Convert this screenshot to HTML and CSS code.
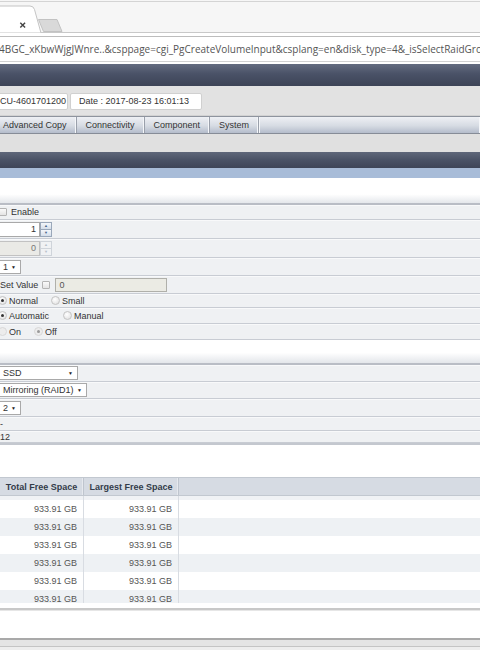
FILE: index.html
```html
<!DOCTYPE html>
<html>
<head>
<meta charset="utf-8">
<link rel="stylesheet" href="styles.css">
</head>
<body>
<div class="tabstrip">
  <svg width="480" height="33" viewBox="0 0 480 33">
    <rect x="0" y="0" width="480" height="33" fill="#f6f6f6"/>
    <line x1="0" y1="1.5" x2="480" y2="1.5" stroke="#d4d4d4"/>
    <path d="M-2,33 V6 H30 Q33.5,6 34.5,9.5 L41,33 Z" fill="#ffffff" stroke="#c4c4c4"/>
    <line x1="41" y1="32.5" x2="480" y2="32.5" stroke="#c8c8c8"/>
    <path d="M38.5,19.5 H57 L62,31.5 H43.5 Z" fill="#d9d9d9" stroke="#c2c2c2"/>
    <path d="M20.3,22.8 L25.1,27.6 M25.1,22.8 L20.3,27.6" stroke="#444" stroke-width="1.4"/>
  </svg>
</div>
<div class="toolbar">
  <div class="omnibox"><span class="url">4BGC_xKbwWjgJWnre..&amp;csppage=cgi_PgCreateVolumeInput&amp;csplang=en&amp;disk_type=4&amp;_isSelectRaidGroup</span></div>
</div>
<div class="header"></div>
<div class="infobar">
  <div class="box box-first">CU-4601701200</div>
  <div class="box box-date">Date : 2017-08-23 16:01:13</div>
</div>
<div class="menu">
  <div class="mtab mtab-first">Advanced Copy</div>
  <div class="mtab">Connectivity</div>
  <div class="mtab">Component</div>
  <div class="mtab">System</div>
  <div class="mtab mtab-fill"></div>
</div>
<div class="graygap"></div>
<div class="titlebar"></div>
<div class="subbar"></div>
<div class="spacer-a"></div>

<div class="form">
  <div class="row r1"><span class="chk chk-first"></span><span class="lbl">Enable</span></div>
  <div class="row r2">
    <span class="num">1</span>
    <span class="spin"><span class="sb up">&#9650;</span><span class="sb dn">&#9660;</span></span>
  </div>
  <div class="row r3">
    <span class="num num-dis">0</span>
    <span class="spin spin-dis"><span class="sb up">&#9650;</span><span class="sb dn">&#9660;</span></span>
  </div>
  <div class="row r4"><span class="sel sel-1">1<span class="arr">&#9660;</span></span></div>
  <div class="row r5">
    <span class="lbl lbl-set">Set Value</span>
    <span class="chk chk-set"></span>
    <span class="txt-dis">0</span>
  </div>
  <div class="row r6">
    <span class="rad rad-first on"></span><span class="lbl">Normal</span>
    <span class="rad rad-next"></span><span class="lbl">Small</span>
  </div>
  <div class="row r7">
    <span class="rad rad-first on"></span><span class="lbl">Automatic</span>
    <span class="rad rad-next2"></span><span class="lbl">Manual</span>
  </div>
  <div class="row r8">
    <span class="rad rad-first dis"></span><span class="lbl">On</span>
    <span class="rad rad-next3 dis on-dis"></span><span class="lbl">Off</span>
  </div>
</div>

<div class="spacer-b"></div>

<div class="form form2">
  <div class="row r9"><span class="sel sel-ssd">SSD<span class="arr">&#9660;</span></span></div>
  <div class="row r10"><span class="sel sel-raid">Mirroring (RAID1)<span class="arr">&#9660;</span></span></div>
  <div class="row r11"><span class="sel sel-1">2<span class="arr">&#9660;</span></span></div>
  <div class="row r12"><span class="lbl lbl-dash">-</span></div>
  <div class="row r13"><span class="lbl">12</span></div>
</div>

<div class="spacer-c"></div>

<div class="grid">
  <div class="ghead">
    <div class="gc c1">Total Free Space</div>
    <div class="gc c2">Largest Free Space</div>
    <div class="gc c3"></div>
  </div>
  <div class="gstrip"><div class="gc c1"></div><div class="gc c2"></div><div class="gc c3"></div></div>
  <div class="gbody">
    <div class="grow"><div class="gc c1">933.91 GB</div><div class="gc c2">933.91 GB</div><div class="gc c3"></div></div>
    <div class="grow alt"><div class="gc c1">933.91 GB</div><div class="gc c2">933.91 GB</div><div class="gc c3"></div></div>
    <div class="grow"><div class="gc c1">933.91 GB</div><div class="gc c2">933.91 GB</div><div class="gc c3"></div></div>
    <div class="grow alt"><div class="gc c1">933.91 GB</div><div class="gc c2">933.91 GB</div><div class="gc c3"></div></div>
    <div class="grow"><div class="gc c1">933.91 GB</div><div class="gc c2">933.91 GB</div><div class="gc c3"></div></div>
    <div class="grow alt"><div class="gc c1">933.91 GB</div><div class="gc c2">933.91 GB</div><div class="gc c3"></div></div>
  </div>
</div>

<div class="gridgap"></div>
<div class="gridline"></div>
<div class="spacer-d"></div>
<div class="statusbar"></div>
</body>
</html>
```

FILE: styles.css
```css
html, body {
  margin: 0;
  padding: 0;
}
body {
  width: 480px;
  height: 650px;
  overflow: hidden;
  background: #ffffff;
  font-family: "Liberation Sans", Arial, sans-serif;
  font-size: 9px;
  color: #333333;
}

.tabstrip {
  height: 33px;
}
.tabstrip svg {
  display: block;
}

.toolbar {
  height: 31px;
  background: #ffffff;
  padding-top: 3px;
  box-sizing: border-box;
}
.omnibox {
  height: 26px;
  border-top: 1px solid #bdbdbd;
  border-bottom: 1px solid #d2d2d2;
  box-sizing: border-box;
  background: #ffffff;
  display: flex;
  align-items: center;
  overflow: hidden;
  white-space: nowrap;
}
.url {
  font-family: "Open Sans", "Noto Sans", sans-serif;
  font-size: 10px;
  color: #555555;
  margin-left: -1px;
  letter-spacing: 0;
}

.header {
  height: 22px;
  background: linear-gradient(#646c80, #4a5267 45%, #3d4457);
}

.infobar {
  height: 30px;
  background: #e2e2e2;
  display: flex;
  align-items: center;
  gap: 2px;
  padding-top: 1px;
  box-sizing: border-box;
  border-bottom: 1px solid #d2d2d2;
}
.box {
  height: 17px;
  background: #ffffff;
  border: 1px solid #d0d0d0;
  border-radius: 2px;
  box-sizing: border-box;
  display: flex;
  align-items: center;
  font-size: 9px;
  color: #333;
}
.box-first {
  width: 74px;
  margin-left: -6px;
  padding-left: 5px;
}
.box-date {
  width: 132px;
  padding-left: 8px;
}

.menu {
  height: 18px;
  display: flex;
  border-top: 1px solid #8e949e;
  border-bottom: 1px solid #868c97;
  box-sizing: border-box;
  background: linear-gradient(#eef0f4, #d6dbe3 55%, #b4bccb);
}
.mtab {
  padding: 0 9px;
  display: flex;
  align-items: center;
  color: #333;
  border-right: 1px solid #9aa0ab;
  box-shadow: inset -1px 0 0 #f4f6f9;
  white-space: nowrap;
}
.mtab-first {
  margin-left: -6px;
}
.mtab-fill {
  flex: 1;
  border-right: none;
  border-left: 1px solid #f4f6f9;
}

.graygap {
  height: 18px;
  background: #e0e0e0;
}
.titlebar {
  height: 16px;
  background: linear-gradient(#5f677a, #4a5266 50%, #3e4558);
}
.subbar {
  height: 10px;
  background: #a8bcd8;
}
.spacer-a {
  height: 25px;
  background: linear-gradient(#ffffff 65%, #e4e7eb);
}

.form {
  border-top: 2px solid #b9bdc5;
  background: #eff1f3;
}
.row {
  display: flex;
  align-items: center;
  border-bottom: 1px solid #c8ccd3;
  box-shadow: inset 0 1px 0 #f8f9fa;
  box-sizing: border-box;
  white-space: nowrap;
}
.r1 { height: 15px; }
.r2 { height: 19px; }
.r3 { height: 19px; }
.r4 { height: 18px; }
.r5 { height: 18px; }
.r6 { height: 14px; }
.r7 { height: 16px; }
.r8 { height: 16px; }
.r9 { height: 17px; }
.r10 { height: 17px; }
.r11 { height: 18px; }
.r12 { height: 14px; }
.r13 { height: 12px; }
.form2 {
  border-bottom: 2px solid #c4c8cf;
}

.lbl {
  color: #333;
}
.chk {
  width: 6px;
  height: 6px;
  border: 1px solid #b4b4b4;
  background: linear-gradient(#fafafa, #e4e4e4);
  border-radius: 1px;
}
.chk-first {
  margin-left: -1px;
  margin-right: 4px;
}
.lbl-set {
  margin-left: 0;
}
.chk-set {
  margin-left: 4px;
}
.txt-dis {
  margin-left: 5px;
  width: 112px;
  height: 14px;
  box-sizing: border-box;
  border: 1px solid #b0b0aa;
  background: #ebebe4;
  padding-left: 3px;
  display: flex;
  align-items: center;
  color: #555;
}

.num {
  width: 41px;
  height: 15px;
  margin-left: -1px;
  box-sizing: border-box;
  border: 1px solid #a9a9a9;
  background: #ffffff;
  display: flex;
  align-items: center;
  justify-content: flex-end;
  padding-right: 3px;
  color: #333;
}
.num-dis {
  background: #eaeae6;
  border-color: #c2c2c2;
  color: #777;
}
.spin {
  width: 12px;
  height: 15px;
  display: flex;
  flex-direction: column;
  border: 1px solid #9aa8ba;
  box-sizing: border-box;
  margin-left: 0;
}
.sb {
  flex: 1;
  display: flex;
  align-items: center;
  justify-content: center;
  font-size: 4px;
  color: #4a6488;
  background: linear-gradient(#f4f7fb, #d4deea);
  line-height: 1;
}
.sb.up {
  border-bottom: 1px solid #9aa8ba;
}
.spin-dis {
  border-color: #cfd4da;
}
.spin-dis .sb {
  color: #b8c0ca;
  background: #f0f2f4;
}
.spin-dis .sb.up {
  border-bottom-color: #cfd4da;
}

.sel {
  height: 14px;
  box-sizing: border-box;
  border: 1px solid #a9a9a9;
  background: #ffffff;
  display: flex;
  align-items: center;
  padding-left: 3px;
  color: #333;
}
.sel-1 {
  width: 22px;
  margin-left: -1px;
}
.sel-ssd {
  width: 79px;
  margin-left: -1px;
}
.sel-raid {
  width: 88px;
  margin-left: -1px;
}
.arr {
  font-size: 5px;
  margin-left: auto;
  margin-right: 4px;
  color: #222;
}

.rad {
  width: 7px;
  height: 7px;
  border-radius: 50%;
  border: 1px solid #c4c4c4;
  background: radial-gradient(circle at 40% 35%, #ffffff, #dcdcdc);
  margin-right: 2px;
  position: relative;
}
.rad-first {
  margin-left: -2px;
}
.rad.on::after,
.rad.on-dis::after {
  content: "";
  position: absolute;
  left: 2px;
  top: 2px;
  width: 3px;
  height: 3px;
  border-radius: 50%;
  background: #333;
}
.rad.on-dis::after {
  background: #9a9a9a;
}
.rad.dis {
  border-color: #d8d8d8;
  background: #ececec;
}
.rad-next { margin-left: 13px; }
.rad-next2 { margin-left: 14px; }
.rad-next3 { margin-left: 13px; }

.spacer-b {
  height: 23px;
  background: linear-gradient(#ffffff 55%, #e3e6ea);
}
.spacer-c {
  height: 32px;
}

.grid {
  font-size: 9px;
}
.ghead {
  display: flex;
  height: 19px;
  border-top: 1px solid #c2c8d0;
  border-bottom: 1px solid #c2c8d0;
  background: #d6dbe3;
  box-sizing: border-box;
  font-weight: bold;
  color: #333c4a;
}
.ghead .gc {
  justify-content: center;
  border-right: 1px solid #bfc5ce;
  box-shadow: inset -1px 0 0 #e6e9ee;
}
.ghead .c3 {
  border-right: none;
  box-shadow: none;
}
.gc {
  display: flex;
  align-items: center;
  box-sizing: border-box;
  white-space: nowrap;
}
.c1 { width: 84px; }
.c2 { width: 95px; }
.c3 { flex: 1; }
.gstrip {
  display: flex;
  height: 4px;
  background: #f0f2f5;
}
.gstrip .c1, .gstrip .c2 {
  border-right: 1px solid #d8dce2;
}
.gbody {
  height: 103px;
  overflow: hidden;
}
.grow {
  display: flex;
  height: 18px;
  background: #ffffff;
  color: #555;
}
.grow.alt {
  background: #eef1f4;
}
.grow .c1, .grow .c2 {
  justify-content: flex-end;
  padding-right: 6px;
  border-right: 1px solid #d8dce2;
}

.gridgap {
  height: 5px;
}
.gridline {
  height: 3px;
  background: #c8c8c8;
  border-bottom: 1px solid #e6e6e6;
  box-sizing: border-box;
}
.spacer-d {
  height: 27px;
}
.statusbar {
  height: 12px;
  border-top: 2px solid #a9a9a9;
  background: linear-gradient(#e4e4e4 0, #e4e4e4 6px, #c4c4c4 6px, #c4c4c4 7px, #ededed 7px);
}
```
